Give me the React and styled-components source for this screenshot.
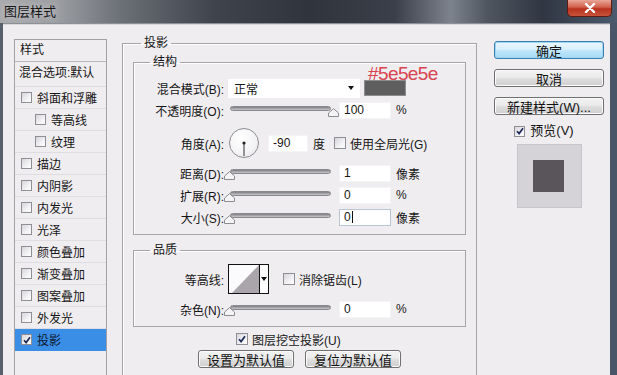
import React from 'react';
import styled, { createGlobalStyle } from 'styled-components';

const UI_FONT = `"Liberation Sans", "Noto Sans CJK SC", sans-serif`;

const GlobalStyle = createGlobalStyle`
  html, body { margin: 0; padding: 0; background: #2f3540; }
  * { box-sizing: border-box; }
  body { font-family: ${UI_FONT}; font-size: 12px; color: #161616; }
`;

const effects = [
  { label: '斜面和浮雕' },
  { label: '等高线', indent: true },
  { label: '纹理', indent: true },
  { label: '描边' },
  { label: '内阴影' },
  { label: '内发光' },
  { label: '光泽' },
  { label: '颜色叠加' },
  { label: '渐变叠加' },
  { label: '图案叠加' },
  { label: '外发光' },
  { label: '投影', checked: true, selected: true },
];

function App() {
  return (
    <>
      <GlobalStyle />
      <Window>
        <TitleBar>
          <Title>图层样式</Title>
          <CloseButton>
            <svg width="12" height="10" viewBox="0 0 12 10">
              <path d="M2 1 L10 9 M10 1 L2 9" stroke="#fff" strokeWidth="2.4" strokeLinecap="round" />
            </svg>
          </CloseButton>
        </TitleBar>

        <Body>
          <StyleList>
            <ListHeader>样式</ListHeader>
            <BlendItem>混合选项:默认</BlendItem>
            {effects.map((e) => (
              <ListItem key={e.label} $indent={e.indent} $selected={e.selected}>
                <Check checked={e.checked} size={11} />
                <span>{e.label}</span>
              </ListItem>
            ))}
          </StyleList>

          <Main>
            <OuterGroup>
              <Legend $ml={8}>投影</Legend>

              <InnerGroup $pt={9} $pb={7}>
                <Legend $ml={16}>结构</Legend>

                <FormRow $h={20}>
                  <Label>混合模式(B):</Label>
                  <Controls>
                    <Select>
                      正常
                      <DropArrow />
                    </Select>
                    <Swatch>
                      <Annotation>#5e5e5e</Annotation>
                    </Swatch>
                  </Controls>
                </FormRow>

                <FormRow $h={20} $mt={2}>
                  <Label>不透明度(O):</Label>
                  <Controls>
                    <Slider value={100} />
                    <NumberBox>100</NumberBox>
                    <Unit>%</Unit>
                  </Controls>
                </FormRow>

                <FormRow $h={32} $mt={7}>
                  <Label>角度(A):</Label>
                  <Controls>
                    <Dial>
                      <svg width="30" height="30" viewBox="0 0 30 30">
                        <line x1="15" y1="15" x2="15" y2="28" stroke="#333" strokeWidth="1" />
                        <circle cx="15" cy="15" r="1.6" fill="#222" />
                      </svg>
                    </Dial>
                    <NumberBox $w={40} $ml={9}>-90</NumberBox>
                    <Unit>度</Unit>
                    <CheckLabel $ml={9}>
                      <Check size={12} />
                      使用全局光(G)
                    </CheckLabel>
                  </Controls>
                </FormRow>

                <FormRow $h={20} $mt={4}>
                  <Label>距离(D):</Label>
                  <Controls>
                    <Slider value={0} />
                    <NumberBox>1</NumberBox>
                    <Unit>像素</Unit>
                  </Controls>
                </FormRow>

                <FormRow $h={20} $mt={2}>
                  <Label>扩展(R):</Label>
                  <Controls>
                    <Slider value={0} />
                    <NumberBox>0</NumberBox>
                    <Unit>%</Unit>
                  </Controls>
                </FormRow>

                <FormRow $h={20} $mt={2}>
                  <Label>大小(S):</Label>
                  <Controls>
                    <Slider value={0} />
                    <NumberBox $focused>
                      0<Caret />
                    </NumberBox>
                    <Unit>像素</Unit>
                  </Controls>
                </FormRow>
              </InnerGroup>

              <InnerGroup $mt={8} $pt={7} $pb={8}>
                <Legend $ml={16}>品质</Legend>

                <FormRow $h={30}>
                  <Label>等高线:</Label>
                  <Controls>
                    <ContourPicker>
                      <ContourCurve>
                        <svg width="30" height="28" viewBox="0 0 30 28">
                          <polygon points="3,28 30,0 30,28" fill="#a9a5ab" />
                        </svg>
                      </ContourCurve>
                      <ContourDrop>
                        <svg width="6" height="4" viewBox="0 0 6 4">
                          <polygon points="0,0 6,0 3,4" fill="#111" />
                        </svg>
                      </ContourDrop>
                    </ContourPicker>
                    <CheckLabel $ml={14}>
                      <Check size={12} />
                      消除锯齿(L)
                    </CheckLabel>
                  </Controls>
                </FormRow>

                <FormRow $h={18} $mt={6}>
                  <Label>杂色(N):</Label>
                  <Controls>
                    <Slider value={0} />
                    <NumberBox>0</NumberBox>
                    <Unit>%</Unit>
                  </Controls>
                </FormRow>
              </InnerGroup>

              <KnockoutRow>
                <CheckLabel>
                  <Check size={12} checked />
                  图层挖空投影(U)
                </CheckLabel>
              </KnockoutRow>

              <ButtonRow>
                <Button $w={96}>设置为默认值</Button>
                <Button $w={96}>复位为默认值</Button>
              </ButtonRow>
            </OuterGroup>
          </Main>

          <Side>
            <Button $w={110} $primary>确定</Button>
            <Button $w={110}>取消</Button>
            <Button $w={110}>新建样式(W)...</Button>
            <PreviewToggle>
              <Check size={11} checked />
              预览(V)
            </PreviewToggle>
            <PreviewBox>
              <PreviewSquare />
            </PreviewBox>
          </Side>
        </Body>
      </Window>
    </>
  );
}

export default App;

function Check({ checked, size }) {
  return (
    <CheckBox $size={size}>
      {checked && (
        <svg width="8" height="8" viewBox="0 0 8 8">
          <path d="M1 4.2 L3.1 6.6 L7 1.2" stroke="#1c2a58" strokeWidth="1.7" fill="none" />
        </svg>
      )}
    </CheckBox>
  );
}

function Slider({ value }) {
  return (
    <SliderWrap>
      <Track />
      <Thumb style={{ left: `${value}%` }}>
        <svg width="11" height="9" viewBox="0 0 11 9">
          <path d="M0.5 8.5 L0.5 5 L5.5 0.7 L10.5 5 L10.5 8.5 Z" fill="#f4f4f6" stroke="#8c8c90" />
        </svg>
      </Thumb>
    </SliderWrap>
  );
}

const Window = styled.div`
  width: 617px;
  height: 375px;
  overflow: hidden;
  display: flex;
  flex-direction: column;
  background: linear-gradient(90deg, #58606c 0%, #3c4450 50%, #4a5568 100%);
`;

const TitleBar = styled.div`
  height: 23px;
  flex: none;
  display: flex;
  align-items: flex-start;
  background: linear-gradient(
    90deg,
    #a9aaae 0%,
    #9d9fa3 9%,
    #6a6e75 20%,
    #3e434c 35%,
    #2f343d 50%,
    #3a3f49 64%,
    #7d838d 73%,
    #50565f 79%,
    #303642 88%,
    #4c5a6e 100%
  );
`;

const Title = styled.div`
  padding: 4px 0 0 4px;
  font-size: 13px;
  line-height: 15px;
  color: #151515;
  text-shadow: 0 0 6px rgba(230, 230, 235, 0.8);
`;

const CloseButton = styled.div`
  margin-left: auto;
  margin-right: 5px;
  width: 45px;
  height: 17px;
  display: flex;
  align-items: center;
  justify-content: center;
  border: 1px solid #5c1c14;
  border-top: none;
  border-radius: 0 0 5px 5px;
  background: linear-gradient(#e9a698 0%, #d0604c 45%, #b8321e 55%, #c8523a 100%);
`;

const Body = styled.div`
  flex: 1;
  display: flex;
  align-items: flex-start;
  margin: 0 7px 0 3px;
  padding-left: 11px;
  background: #f0edf1;
  border-top: 1px solid #8c9098;
  box-shadow: inset 0 1px 0 #d8d8dc;
`;

const StyleList = styled.div`
  width: 93px;
  height: 360px;
  margin-top: 15px;
  flex: none;
  border: 1px solid #a3a1a6;
  background: #f0edf1;
`;

const ListHeader = styled.div`
  height: 22px;
  padding: 2px 0 0 5px;
  line-height: 16px;
  border-bottom: 1px solid #b9b7bc;
  font-size: 12px;
`;

const BlendItem = styled.div`
  height: 25px;
  padding: 3px 0 0 4px;
  line-height: 16px;
  border-bottom: 1px solid #dedbe0;
  font-size: 12px;
  white-space: nowrap;
`;

const ListItem = styled.div`
  height: 22px;
  display: flex;
  align-items: center;
  gap: 5px;
  padding-left: ${(p) => (p.$indent ? 20 : 6)}px;
  font-size: 12px;
  border-bottom: 1px solid ${(p) => (p.$selected ? '#3a8ee6' : '#e0dde2')};
  background: ${(p) => (p.$selected ? '#3a8ee6' : 'transparent')};
  color: ${(p) => (p.$selected ? '#0d1830' : '#161616')};
`;

const CheckBox = styled.span`
  width: ${(p) => p.$size}px;
  height: ${(p) => p.$size}px;
  flex: none;
  display: inline-flex;
  align-items: center;
  justify-content: center;
  border: 1px solid #8e8e94;
  background: linear-gradient(135deg, #d6d5da 0%, #f2f2f4 60%, #fdfdfd 100%);
`;

const Main = styled.div`
  margin-top: 12px;
  margin-left: 15px;
  flex: none;
`;

const OuterGroup = styled.fieldset`
  width: 355px;
  height: 360px;
  margin: 0;
  padding: 5px 10px 0 10px;
  min-width: 0;
  border: 1px solid #a6a4a9;
  box-shadow: inset 1px 1px 0 #fff;
`;

const InnerGroup = styled.fieldset`
  margin: ${(p) => p.$mt || 0}px 0 0 0;
  padding: ${(p) => p.$pt}px 0 ${(p) => p.$pb}px 0;
  min-width: 0;
  border: 1px solid #a6a4a9;
  box-shadow: inset 1px 1px 0 #fff;
`;

const Legend = styled.legend`
  margin-left: ${(p) => p.$ml}px;
  padding: 0 3px;
  font-size: 12px;
  line-height: 14px;
`;

const FormRow = styled.div`
  display: grid;
  grid-template-columns: 90px 1fr;
  column-gap: 4px;
  align-items: center;
  height: ${(p) => p.$h}px;
  margin-top: ${(p) => p.$mt || 0}px;
`;

const Label = styled.div`
  text-align: right;
  font-size: 12px;
  white-space: nowrap;
`;

const Controls = styled.div`
  display: flex;
  align-items: center;
  height: 100%;
`;

const Select = styled.div`
  width: 132px;
  height: 19px;
  display: flex;
  align-items: center;
  padding-left: 6px;
  background: #fff;
  font-size: 12px;
`;

const DropArrow = styled.span`
  margin-left: auto;
  margin-right: 6px;
  border-left: 3.5px solid transparent;
  border-right: 3.5px solid transparent;
  border-top: 4px solid #111;
`;

const Swatch = styled.div`
  position: relative;
  width: 42px;
  height: 16px;
  margin-left: 4px;
  background: #5e5e5e;
  border: 1px solid #8e8e92;
`;

const Annotation = styled.span`
  position: absolute;
  left: 3px;
  top: -17px;
  font-family: "Liberation Sans", sans-serif;
  font-size: 19px;
  line-height: 19px;
  letter-spacing: -0.6px;
  color: #d8434f;
  white-space: nowrap;
`;

const SliderWrap = styled.div`
  position: relative;
  width: 104px;
  height: 14px;
  flex: none;
`;

const Track = styled.div`
  position: absolute;
  left: 2px;
  right: 1px;
  top: 3px;
  height: 5px;
  border-radius: 3px;
  border: 1px solid #8a8a8e;
  background: linear-gradient(#7e7e82, #c9c9cc);
`;

const Thumb = styled.div`
  position: absolute;
  top: 5px;
  width: 11px;
  height: 9px;
  transform: translateX(-4px);
  line-height: 0;
`;

const NumberBox = styled.div`
  width: ${(p) => p.$w || 52}px;
  height: 17px;
  margin-left: ${(p) => (p.$ml !== undefined ? p.$ml : 7)}px;
  padding-left: 4px;
  display: flex;
  align-items: center;
  background: #fff;
  border: 1px solid ${(p) => (p.$focused ? '#b6c6d8' : '#f4f4f6')};
  font-size: 12px;
  flex: none;
`;

const Caret = styled.span`
  display: inline-block;
  width: 1px;
  height: 12px;
  margin-left: 1px;
  background: #111;
`;

const Unit = styled.span`
  margin-left: 5px;
  font-size: 12px;
`;

const Dial = styled.div`
  width: 30px;
  height: 30px;
  margin-left: 1px;
  flex: none;
  border-radius: 50%;
  border: 1px solid #8e8e92;
  background: radial-gradient(circle at 40% 35%, #ffffff 0%, #f3f2f5 60%, #dedde2 100%);
  line-height: 0;
  svg { margin: -1px 0 0 -1px; }
`;

const CheckLabel = styled.label`
  display: flex;
  align-items: center;
  gap: 4px;
  margin-left: ${(p) => p.$ml || 0}px;
  font-size: 12px;
  white-space: nowrap;
`;

const ContourPicker = styled.div`
  width: 41px;
  height: 30px;
  display: flex;
  border: 1px solid #111;
  background: #fbfafc;
  flex: none;
`;

const ContourCurve = styled.div`
  width: 30px;
  line-height: 0;
`;

const ContourDrop = styled.div`
  flex: 1;
  display: flex;
  align-items: center;
  justify-content: center;
  border-left: 1px solid #111;
  background: #fff;
`;

const KnockoutRow = styled.div`
  height: 14px;
  margin-top: 5px;
  padding-left: 103px;
  display: flex;
  align-items: center;
`;

const ButtonRow = styled.div`
  display: flex;
  justify-content: center;
  gap: 11px;
  margin-top: 4px;
`;

const Button = styled.div`
  width: ${(p) => p.$w}px;
  height: 18px;
  display: flex;
  align-items: center;
  justify-content: center;
  border-radius: 3px;
  border: 1px solid ${(p) => (p.$primary ? '#3c7fb1' : '#707070')};
  background: ${(p) =>
    p.$primary
      ? 'linear-gradient(#eaf6fd 0%, #d9f0fc 45%, #bee6fd 55%, #a7d9f5 100%)'
      : 'linear-gradient(#f2f2f2 0%, #ebebeb 45%, #dddddd 55%, #cfcfcf 100%)'};
  box-shadow: inset 0 0 0 1px ${(p) => (p.$primary ? '#9ed6f4' : '#fbfbfb')};
  font-size: 13px;
  color: #111;
  white-space: nowrap;
`;

const Side = styled.div`
  width: 110px;
  margin-top: 17px;
  margin-left: 17px;
  flex: none;
  display: flex;
  flex-direction: column;
  align-items: center;
  gap: 10px;
`;

const PreviewToggle = styled.label`
  display: flex;
  align-items: center;
  gap: 5px;
  margin-top: -1px;
  margin-right: 10px;
  font-size: 13px;
  line-height: 14px;
`;

const PreviewBox = styled.div`
  width: 65px;
  height: 64px;
  margin-top: -4px;
  display: flex;
  align-items: center;
  justify-content: center;
  background: #d6d3d8;
  border: 1px solid #c8c5ca;
`;

const PreviewSquare = styled.div`
  width: 31px;
  height: 32px;
  margin-right: 2px;
  background: #5a555b;
`;
